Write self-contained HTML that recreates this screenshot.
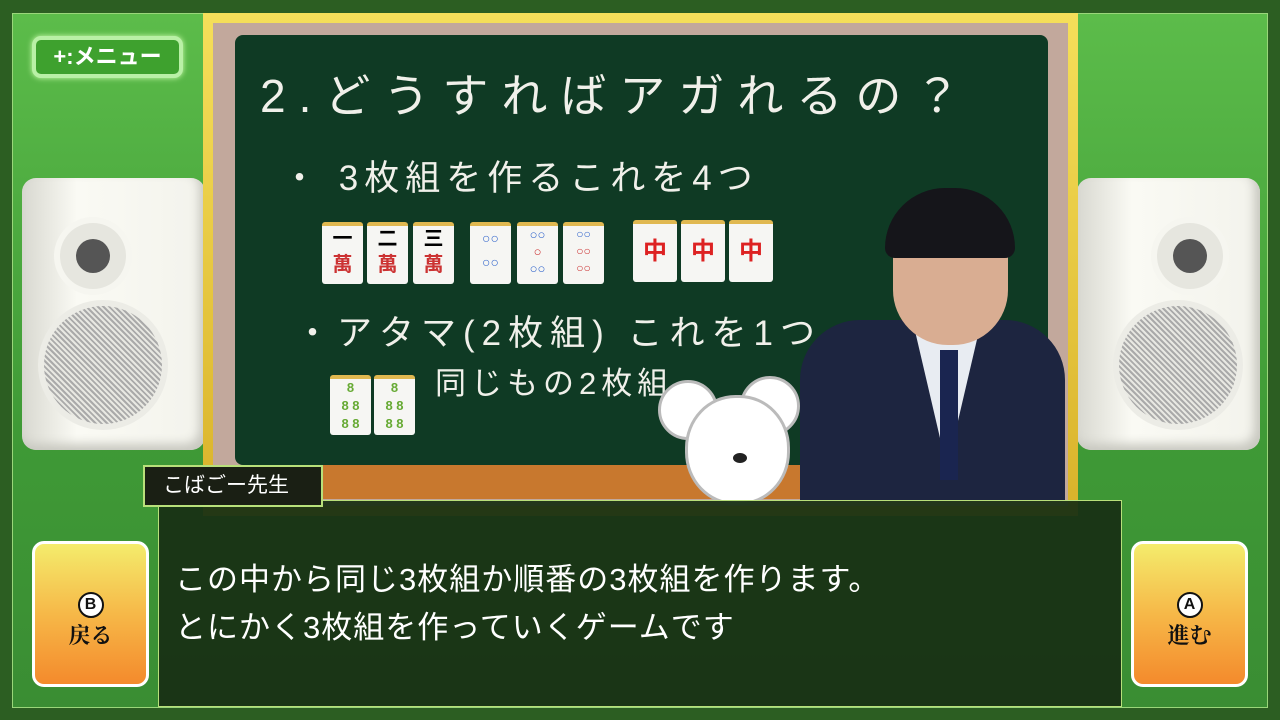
<!DOCTYPE html><html><head><meta charset="utf-8"><style>
*{margin:0;padding:0;box-sizing:border-box}
body{width:1280px;height:720px;overflow:hidden;background:#2c5e22;font-family:"Liberation Sans","Noto Sans CJK JP",sans-serif;position:relative}
.abs{position:absolute}
.panel{left:12px;top:13px;width:1256px;height:695px;background:linear-gradient(180deg,#5cbc4a,#3f9a36 60%,#3a8d33);border:1px solid #9ad67a}
.menu{left:32px;top:36px;width:151px;height:42px;border-radius:9px;background:#3ea12e;border:4px solid #b9f0a6;color:#fff;font-weight:bold;font-size:22px;line-height:34px;text-align:center;box-shadow:0 0 6px #cfffb0}
.spk{top:178px;width:183px;height:272px;border-radius:14px;background:linear-gradient(90deg,#d8d8d0,#fafaf4 30%,#f3f3ec);box-shadow:inset -6px -6px 10px #c8c8c0}
.frame{left:203px;top:13px;width:875px;height:503px;background:linear-gradient(#f5df5a,#d9b22a);padding:10px}
.cork{width:100%;height:100%;background:#c2a89c;padding:12px 20px 0 20px;position:relative}
.board{position:absolute;left:22px;top:12px;right:20px;height:430px;background:#0f3a24;border-radius:8px}
.tray{position:absolute;left:22px;right:20px;top:442px;height:34px;background:#c8782e}
.chalk{color:#f0f0ea;position:absolute;white-space:nowrap}
.tile{position:absolute;width:41px;height:62px;background:#f6f6f3;border-top:4px solid #e0b850;border-radius:3px;text-align:center;font-weight:bold;font-size:20px;line-height:26px}
.dlg{left:158px;top:500px;width:964px;height:207px;background:rgba(24,48,20,.94);border:1px solid #b8e07a}
.name{left:143px;top:465px;width:180px;height:42px;background:#1a1f14;border:2px solid #b8e07a;color:#fff;font-size:21px;line-height:38px;padding-left:18px}
.btn{top:541px;width:117px;height:146px;border-radius:12px;border:3px solid #fff;background:linear-gradient(#f4ec6c,#f6b848 50%,#f48a2c);text-align:center;font-family:"Noto Serif CJK SC",serif;font-weight:bold;font-size:22px;color:#111;padding-top:40px;line-height:34px}
.circ{display:inline-block;width:26px;height:26px;border:2px solid #111;border-radius:50%;font-size:16px;line-height:22px;font-family:"Liberation Sans",sans-serif;background:#fff}
</style></head><body>
<div class="abs panel"></div>
<div class="abs menu">+:メニュー</div>
<div class="abs spk" style="left:22px"><div class="abs" style="left:38px;top:45px;width:66px;height:66px;border-radius:50%;background:#e6e6df;box-shadow:0 0 0 6px #f6f6f0"><div class="abs" style="left:16px;top:16px;width:34px;height:34px;border-radius:50%;background:#555"></div></div><div class="abs" style="left:22px;top:128px;width:118px;height:118px;border-radius:50%;background:repeating-linear-gradient(45deg,#aaa 0 2px,#e8e8e2 2px 4px);box-shadow:0 0 0 6px #ececE6"></div></div>
<div class="abs spk" style="left:1077px"><div class="abs" style="left:80px;top:45px;width:66px;height:66px;border-radius:50%;background:#e6e6df;box-shadow:0 0 0 6px #f6f6f0"><div class="abs" style="left:16px;top:16px;width:34px;height:34px;border-radius:50%;background:#555"></div></div><div class="abs" style="left:42px;top:128px;width:118px;height:118px;border-radius:50%;background:repeating-linear-gradient(45deg,#aaa 0 2px,#e8e8e2 2px 4px);box-shadow:0 0 0 6px #ececE6"></div></div>
<div class="abs frame"><div class="cork"><div class="board"></div><div class="tray"></div></div></div>
<div class="chalk" style="left:260px;top:60px;font-size:46px;letter-spacing:13px">2.どうすればアガれるの？</div>
<div class="chalk" style="left:282px;top:150px;font-size:35px;letter-spacing:6px">・ 3枚組を作るこれを4つ</div>
<div class="chalk" style="left:295px;top:305px;font-size:35px;letter-spacing:7px">・アタマ(2枚組) これを1つ</div>
<div class="chalk" style="left:435px;top:358px;font-size:31px;letter-spacing:5px">同じもの2枚組</div>
<div class="tile" style="left:322px;top:222px">一<br><span style="color:#c33">萬</span></div>
<div class="tile" style="left:367px;top:222px">二<br><span style="color:#c33">萬</span></div>
<div class="tile" style="left:413px;top:222px">三<br><span style="color:#c33">萬</span></div>
<div class="tile" style="left:470px;top:222px;color:#36c;font-size:14px;line-height:24px">○○<br>○○</div>
<div class="tile" style="left:517px;top:222px;color:#36c;font-size:13px;line-height:17px">○○<br><span style="color:#c33">○</span><br>○○</div>
<div class="tile" style="left:563px;top:222px;color:#c33;font-size:12px;line-height:17px"><span style="color:#36c">○○</span><br>○○<br>○○</div>
<div class="tile" style="left:633px;top:220px;color:#d22;font-size:24px;line-height:56px;width:44px">中</div>
<div class="tile" style="left:681px;top:220px;color:#d22;font-size:24px;line-height:56px;width:44px">中</div>
<div class="tile" style="left:729px;top:220px;color:#d22;font-size:24px;line-height:56px;width:44px">中</div>
<div class="tile" style="left:330px;top:375px;height:60px;color:#6a3;font-size:13px;line-height:18px">8<br>8 8<br>8 8</div>
<div class="tile" style="left:374px;top:375px;height:60px;color:#6a3;font-size:13px;line-height:18px">8<br>8 8<br>8 8</div>
<div class="abs" style="left:800px;top:320px;width:265px;height:180px;background:#1d2540;border-radius:60px 60px 0 0"></div>
<div class="abs" style="left:912px;top:318px;width:70px;height:120px;background:#e8ecf2;clip-path:polygon(0 0,100% 0,60% 100%,40% 100%)"></div>
<div class="abs" style="left:940px;top:350px;width:18px;height:130px;background:#1a2550"></div>
<div class="abs" style="left:893px;top:205px;width:115px;height:140px;border-radius:50px 50px 55px 55px;background:#d9ad92"></div>
<div class="abs" style="left:885px;top:188px;width:130px;height:70px;border-radius:60px 60px 10px 10px;background:#15151a"></div>
<div class="abs" style="left:658px;top:380px;width:60px;height:60px;border-radius:50%;background:#fff;border:3px solid #bbb"></div>
<div class="abs" style="left:740px;top:376px;width:60px;height:60px;border-radius:50%;background:#fff;border:3px solid #bbb"></div>
<div class="abs" style="left:685px;top:395px;width:105px;height:110px;border-radius:48%;background:#fff;border:3px solid #bbb"><div class="abs" style="left:45px;top:55px;width:14px;height:10px;border-radius:50%;background:#222"></div></div>
<div class="abs dlg"></div>
<div class="abs name">こばごー先生</div>
<div class="abs" style="left:175px;top:556px;color:#fff;font-size:31px;line-height:48px;letter-spacing:1px">この中から同じ3枚組か順番の3枚組を作ります。<br>とにかく3枚組を作っていくゲームです</div>
<div class="abs btn" style="left:32px"><span class="circ">B</span><br>戻る</div>
<div class="abs btn" style="left:1131px"><span class="circ">A</span><br>進む</div>
</body></html>
